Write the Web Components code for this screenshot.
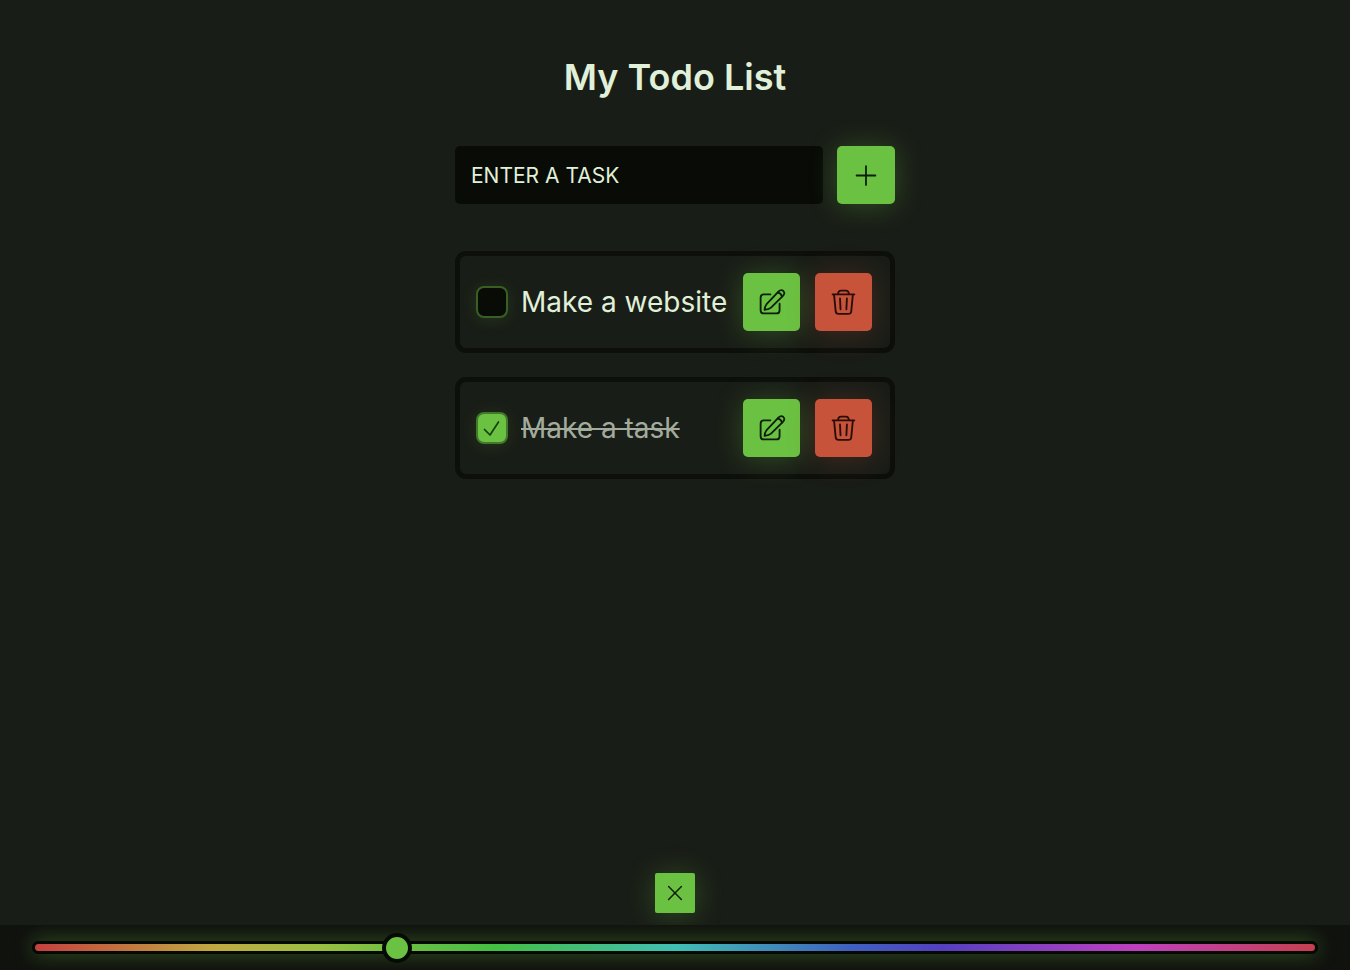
<!DOCTYPE html>
<html lang="en">
<head>
<meta charset="utf-8">
<meta name="viewport" content="width=device-width, initial-scale=1">
<title>My Todo List</title>
<style>
  :root {
    --bg: #191d17;
    --ink: #080b06;
    --text: #e0f0d9;
    --accent: #6bc142;
    --accent-glow: rgba(107, 193, 66, .3);
    --danger: #c6533a;
    --danger-glow: rgba(198, 83, 58, .25);
    --edge: #0d0f0b;
  }
  body {
    margin: 0;
    background: var(--bg);
    color: var(--text);
    font-family: Inter, "Noto Sans", sans-serif;
  }
</style>
</head>
<body>
<todo-app>
  <todo-form></todo-form>
  <todo-item>Make a website</todo-item>
  <todo-item done>Make a task</todo-item>
  <hue-bar slot="footer" value="100"></hue-bar>
</todo-app>

<script>
const define = (name, html, setup) => {
  const template = document.createElement('template');
  template.innerHTML = html;
  customElements.define(name, class extends HTMLElement {
    connectedCallback() {
      if (this.shadowRoot) return;
      this.attachShadow({ mode: 'open' }).append(template.content.cloneNode(true));
      if (setup) setup(this, this.shadowRoot);
    }
  });
};

const icons = {
  plus: '<path d="M11.500 3v18M2.500 12h18"/>',
  close: '<path d="M5 5l14 14M19 5L5 19"/>',
  edit: '<path d="M10.500 5H4.500Q1.500 5 1.500 8V19.500Q1.500 22.500 4.500 22.500H16Q19 22.500 19 19.500V13.500"/><path d="M6.800 14.300L17.900 2.500Q20.200 .1 22.300 1.700Q24.500 3.700 22.300 6.100L11.100 17.200Q9.300 18.800 5.200 19.200Q5.300 16.200 6.800 14.300Z"/><path d="M17.400 3.400Q20.500 4 21.200 7"/>',
  trash: '<path d="M1.500 5H21.500M2.800 5L4.300 20.500Q4.500 23 7 23H16Q18.500 23 18.700 20.500L20.200 5M6.500 5Q6.500 1.500 9.300 1.500H13.700Q16.500 1.500 16.500 5M8.300 8.700L8.800 18.700M14.700 8.700L14.200 18.700"/>'
};

define('icon-button', `
  <style>
    :host { display: block; flex: none; width: var(--size, 58px); height: var(--size, 58px); }
    button {
      display: grid; place-items: center; width: 100%; height: 100%;
      margin: 0; padding: 0; border: 0; border-radius: var(--radius, 5px);
      background: var(--accent); color: #0b1f08; cursor: pointer;
      box-shadow: 0 2px 28px var(--accent-glow);
    }
    :host([tone="danger"]) button {
      background: var(--danger); color: #2b0d07;
      box-shadow: 0 2px 28px var(--danger-glow);
    }
    svg {
      width: var(--icon, 26px); height: var(--icon, 26px); fill: none; overflow: visible;
      stroke: currentColor; stroke-width: var(--stroke, 1.7);
      stroke-linecap: round; stroke-linejoin: round;
    }
  </style>
  <button type="button"><svg viewBox="0 0 24 24" aria-hidden="true"></svg></button>
`, (host, root) => {
  root.querySelector('svg').innerHTML = icons[host.getAttribute('icon')];
  root.querySelector('button').setAttribute('aria-label', host.getAttribute('label'));
});

define('todo-form', `
  <style>
    :host { display: block; margin-bottom: 23px; }
    form { display: flex; gap: 14px; }
    input {
      flex: 1; min-width: 0; height: 58px; box-sizing: border-box;
      padding: 0 16px; border: 0; border-radius: 5px;
      background: var(--ink); color: var(--text);
      font: 400 21px/24px Inter, "Noto Sans", sans-serif; outline: none;
    }
    input::placeholder { color: var(--text); opacity: 1; }
    icon-button { --icon: 25px; }
  </style>
  <form>
    <input type="text" placeholder="ENTER A TASK" aria-label="Enter a task">
    <icon-button icon="plus" label="Add task"></icon-button>
  </form>
`);

define('todo-item', `
  <style>
    :host { display: block; }
    article {
      display: flex; align-items: center; gap: 15px;
      padding: 17px 18px 17px 16px;
      border: 5px solid var(--edge); border-radius: 11px;
    }
    label {
      display: flex; align-items: center; gap: 13px; flex: 1; min-width: 0;
      font-size: 28px; line-height: 36px; cursor: pointer; white-space: nowrap;
    }
    input {
      appearance: none; flex: none; width: 32px; height: 32px; margin: 0; box-sizing: border-box;
      border: 2px solid #386022; border-radius: 8px;
      background: var(--ink); box-shadow: 0 2px 16px rgba(107, 193, 66, .14);
    }
    .box { display: grid; flex: none; }
    .box > * { grid-area: 1 / 1; }
    svg {
      width: 32px; height: 32px; fill: none; stroke: #16400c; stroke-width: 1.7;
      stroke-linecap: round; stroke-linejoin: round; visibility: hidden; pointer-events: none;
    }
    input:checked { background: var(--accent); border-color: #41782a; }
    input:checked + svg { visibility: visible; }
    :host([done]) .text { color: #a2ab9c; text-decoration: line-through 2px; }
    icon-button { width: 57px; }
  </style>
  <article>
    <label>
      <span class="box"><input type="checkbox"><svg viewBox="0 0 32 32" aria-hidden="true"><path d="M8.500 17.500l5.500 5.500 8.500-13"/></svg></span>
      <span class="text"><slot></slot></span>
    </label>
    <icon-button icon="edit" label="Edit task"></icon-button>
    <icon-button icon="trash" label="Delete task" tone="danger"></icon-button>
  </article>
`, (host, root) => {
  const box = root.querySelector('input');
  box.checked = host.hasAttribute('done');
  box.addEventListener('change', () => host.toggleAttribute('done', box.checked));
});

define('hue-bar', `
  <style>
    :host { display: block; }
    .close { display: flex; justify-content: center; padding-bottom: 12px; }
    .close icon-button { --size: 40px; --icon: 22px; --stroke: 1.6; --radius: 2px; }
    .bar {
      display: flex; align-items: center; height: 45px; padding: 0 32px;
      background: #10120e; overflow: hidden; position: relative;
    }
    input {
      appearance: none; width: 100%; height: 13px; margin: 0; box-sizing: border-box;
      border: 3px solid #060804; border-radius: 7px; outline: none;
      background: linear-gradient(90deg, #c5403f, #c0aa40 14%, #9cbf40 22%, #6bbf42 29%, #43bf43 36%, #40bfb4 50%, #405fbf 64%, #5440bf 71%, #bf40bf 86%, #c5404f);
      box-shadow: 0 0 20px rgba(107, 193, 66, .42);
    }
    input::-webkit-slider-thumb {
      appearance: none; width: 30px; height: 30px; box-sizing: border-box;
      border: 4px solid #060a04; border-radius: 50%; background: var(--accent);
    }
  </style>
  <div class="close"><icon-button icon="close" label="Close color picker"></icon-button></div>
  <div class="bar"><input type="range" min="0" max="360" aria-label="Theme hue"></div>
`, (host, root) => {
  root.querySelector('input').value = host.getAttribute('value');
});

define('todo-app', `
  <style>
    :host { display: flex; flex-direction: column; min-height: 100vh; }
    main {
      flex: 1; display: flex; flex-direction: column; gap: 24px; box-sizing: border-box;
      width: 100%; max-width: 440px; margin: 0 auto; padding: 54px 0 24px;
    }
    h1 { margin: 0 0 22px; font-size: 36px; line-height: 46px; font-weight: 600; text-align: center; }
  </style>
  <main>
    <h1>My Todo List</h1>
    <slot></slot>
  </main>
  <slot name="footer"></slot>
`);
</script>
</body>
</html>
